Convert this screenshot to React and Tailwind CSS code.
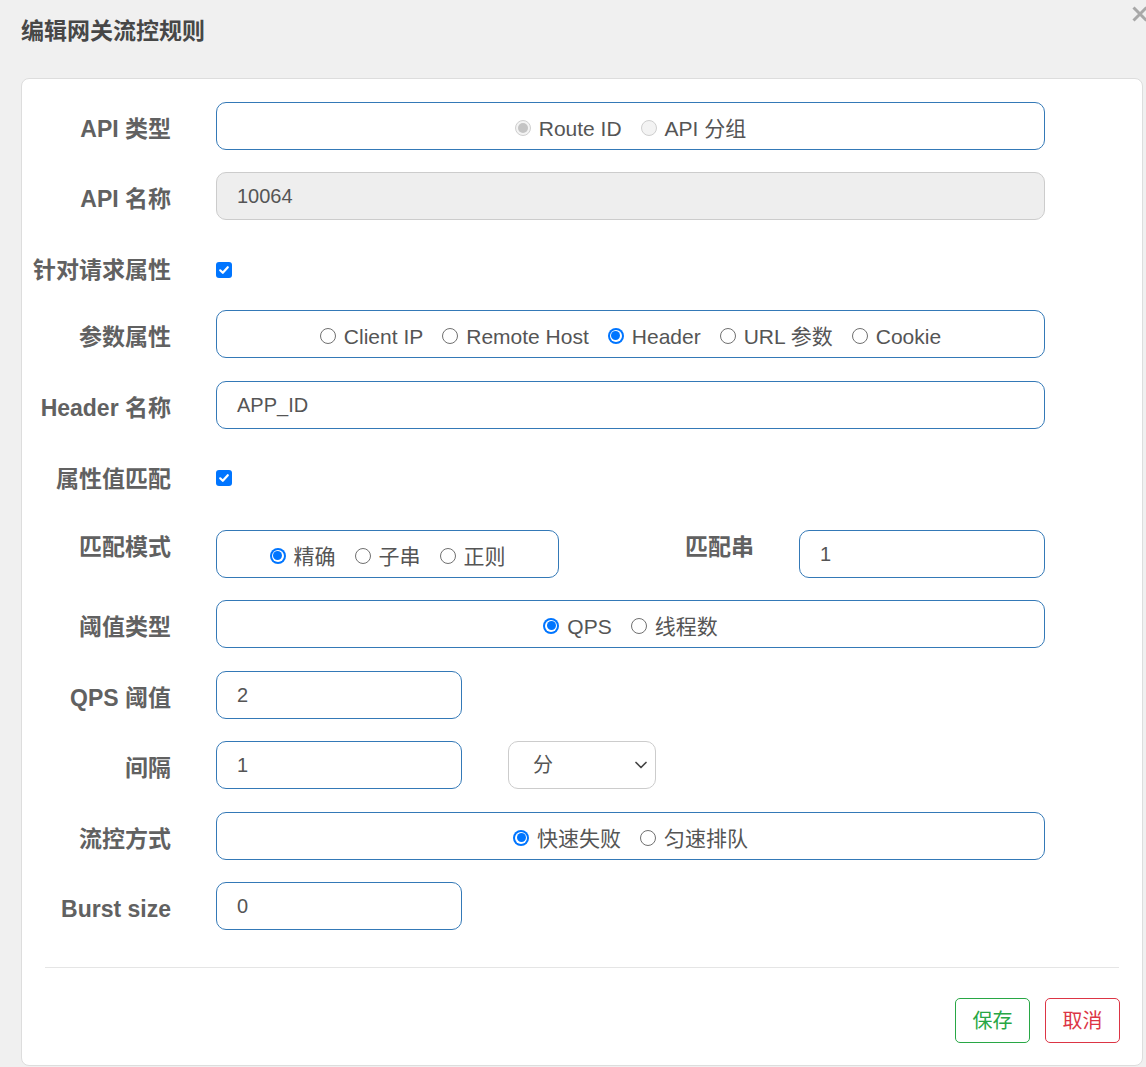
import { ChevronDown } from 'lucide-react'

const font = { fontFamily: '"Liberation Sans", "Noto Sans CJK SC", sans-serif' }

function Label({ children, className = '' }) {
  return (
    <div className={`w-[149px] shrink-0 text-right text-[23px] font-bold text-[#616161] leading-[34px] whitespace-nowrap ${className}`}>
      {children}
    </div>
  )
}

function Row({ label, children, className = '' }) {
  return (
    <div className={`flex items-center h-12 ${className}`}>
      <Label className="pt-[6px]">{label}</Label>
      <div className="ml-[45px] flex items-center">{children}</div>
    </div>
  )
}

function TextBox({ value, width = 'w-[829px]', disabled }) {
  return (
    <div
      className={`${width} h-12 rounded-[10px] border px-5 flex items-center text-[20px] text-[#555] ${
        disabled ? 'bg-[#eeeeee] border-[#cccccc]' : 'bg-white border-[#3479b7]'
      }`}
    >
      {value}
    </div>
  )
}

// drawn like Chrome's native radio, at 16px
function RadioDot({ checked, disabled }) {
  if (disabled) {
    return (
      <span className="w-4 h-4 shrink-0 rounded-full border border-[#cfcfcf] bg-[#f3f3f3] flex items-center justify-center">
        {checked && <span className="block w-[10px] h-[10px] rounded-full bg-[#c4c4c4]" />}
      </span>
    )
  }
  if (checked) {
    return (
      <span className="w-4 h-4 shrink-0 rounded-full bg-[#0075ff] flex items-center justify-center">
        <span className="w-[12px] h-[12px] rounded-full bg-white flex items-center justify-center">
          <span className="block w-[9px] h-[9px] rounded-full bg-[#0075ff]" />
        </span>
      </span>
    )
  }
  return <span className="block w-4 h-4 shrink-0 rounded-full border-[1.5px] border-[#707070] bg-white" />
}

function Radio({ label, checked, disabled }) {
  return (
    <label className="inline-flex items-center gap-[8px] whitespace-nowrap">
      <span className="flex -mt-[3px]">
        <RadioDot checked={checked} disabled={disabled} />
      </span>
      <span>{label}</span>
    </label>
  )
}

function RadioBox({ items, width = 'w-[829px]' }) {
  return (
    <div className={`${width} h-12 rounded-[10px] border border-[#3479b7] bg-white flex items-center justify-center gap-[19px] pt-[6px] text-[21px] text-[#555]`}>
      {items.map((it) => (
        <Radio key={it.label} {...it} />
      ))}
    </div>
  )
}

function Check() {
  return (
    <span className="w-4 h-4 rounded-[3px] bg-[#0075ff] flex items-center justify-center">
      <svg width="12" height="12" viewBox="0 0 12 12">
        <path d="M2.2 6.3 L4.8 8.8 L9.8 3.2" fill="none" stroke="white" strokeWidth="2.2" strokeLinecap="round" strokeLinejoin="round" />
      </svg>
    </span>
  )
}

export default function App() {
  return (
    <div className="relative w-full h-[1067px] overflow-hidden bg-[#f0f0f0]" style={font}>
      <svg
        className="absolute left-[1132px] top-[6px]"
        width="16"
        height="16"
        viewBox="0 0 16 16"
      >
        <path d="M1.5 1.5 L14.5 14.5 M14.5 1.5 L1.5 14.5" stroke="#a8a8a8" strokeWidth="3" />
      </svg>

      <div className="pt-[14px] px-[21px] text-[23px] font-bold text-[#474747] leading-[34px]">
        编辑网关流控规则
      </div>

      <div className="ml-[21px] mt-[30px] w-[1122px] h-[988px] bg-white border border-[#dddddd] rounded-[8px] pt-[23px]">
        <Row label="API 类型">
          <RadioBox
            items={[
              { label: 'Route ID', checked: true, disabled: true },
              { label: 'API 分组', checked: false, disabled: true },
            ]}
          />
        </Row>

        <Row label="API 名称" className="mt-[22px]">
          <TextBox value="10064" disabled />
        </Row>

        <Row label="针对请求属性" className="mt-[23px]">
          <div className="pt-[6px] flex items-center">
            <Check />
          </div>
        </Row>

        <Row label="参数属性" className="mt-[19px]">
          <RadioBox
            items={[
              { label: 'Client IP' },
              { label: 'Remote Host' },
              { label: 'Header', checked: true },
              { label: 'URL 参数' },
              { label: 'Cookie' },
            ]}
          />
        </Row>

        <Row label="Header 名称" className="mt-[23px]">
          <TextBox value="APP_ID" />
        </Row>

        <Row label="属性值匹配" className="mt-[23px]">
          <div className="pt-[4px] flex items-center">
            <Check />
          </div>
        </Row>

        <div className="flex items-start h-12 mt-[30px]">
          <Label>匹配模式</Label>
          <div className="ml-[45px]">
            <RadioBox
              width="w-[343px]"
              items={[{ label: '精确', checked: true }, { label: '子串' }, { label: '正则' }]}
            />
          </div>
          <div className="w-[195px] shrink-0 text-right text-[23px] font-bold text-[#616161] leading-[34px]">
            匹配串
          </div>
          <div className="ml-[45px]">
            <TextBox value="1" width="w-[246px]" />
          </div>
        </div>

        <Row label="阈值类型" className="mt-[22px]">
          <RadioBox items={[{ label: 'QPS', checked: true }, { label: '线程数' }]} />
        </Row>

        <Row label="QPS 阈值" className="mt-[23px]">
          <TextBox value="2" width="w-[246px]" />
        </Row>

        <Row label="间隔" className="mt-[22px]">
          <TextBox value="1" width="w-[246px]" />
          <div className="ml-[46px] w-[148px] h-12 rounded-[10px] border border-[#cccccc] bg-white flex items-center justify-between pl-6 pr-[4px] text-[20px] text-[#555]">
            <span>分</span>
            <ChevronDown size={20} strokeWidth={2} className="text-[#444]" />
          </div>
        </Row>

        <Row label="流控方式" className="mt-[23px]">
          <RadioBox items={[{ label: '快速失败', checked: true }, { label: '匀速排队' }]} />
        </Row>

        <Row label="Burst size" className="mt-[22px]">
          <TextBox value="0" width="w-[246px]" />
        </Row>

        <div className="mx-[23px] mt-[37px] border-t border-[#e5e5e5]" />

        <div className="flex justify-end gap-[15px] mr-[22px] mt-[30px]">
          <button className="w-[75px] h-[45px] rounded-[5px] border border-[#28a745] text-[#28a745] text-[20px] bg-white">
            保存
          </button>
          <button className="w-[75px] h-[45px] rounded-[5px] border border-[#dc3545] text-[#dc3545] text-[20px] bg-white">
            取消
          </button>
        </div>
      </div>
    </div>
  )
}
